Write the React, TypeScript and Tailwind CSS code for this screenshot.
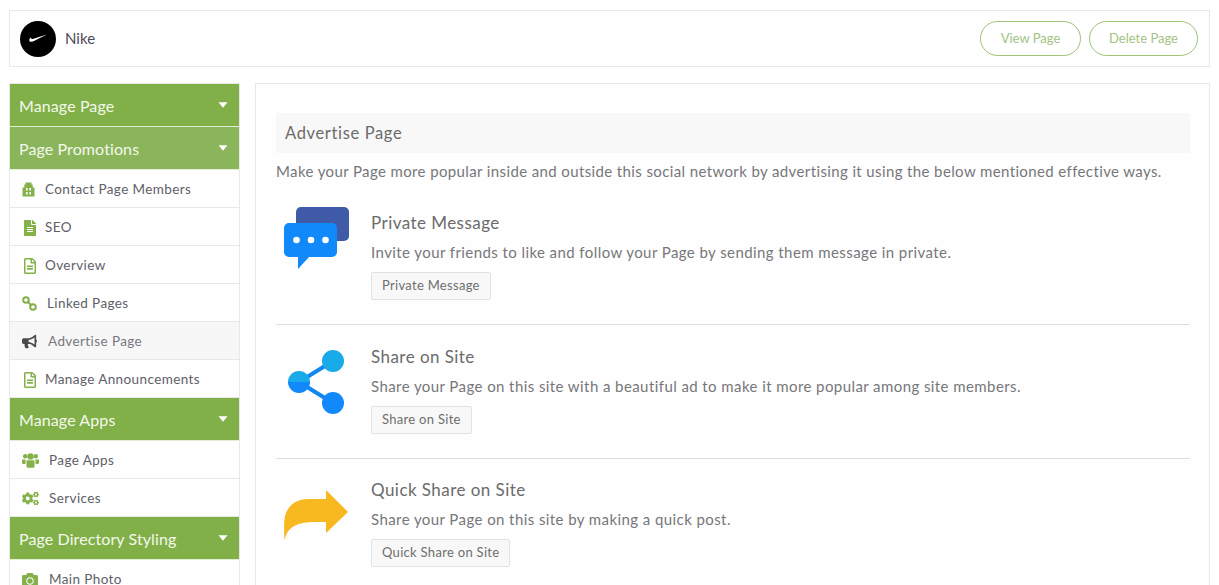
import * as React from "react"
import { FaFileAlt, FaRegFileAlt, FaBullhorn, FaCogs, FaCamera } from "react-icons/fa"

function CaretDown() {
  return (
    <svg width="10" height="6" viewBox="0 0 10 6" className="mb-[1px]">
      <path d="M0.5 0.3h9L5 5.7z" fill="#ffffff" />
    </svg>
  )
}

function ContactIcon() {
  return (
    <svg width="13" height="15" viewBox="0 0 13 15" fill="#84b149">
      <path d="M3.5 0.5h6v2h1.2v3H12.5V14.5H0.5V5.5h1.8v-3h1.2z" />
      <rect x="4" y="6" width="1.6" height="2.5" fill="#fff" />
      <rect x="7.4" y="6" width="1.6" height="2.5" fill="#fff" />
      <rect x="4" y="10" width="1.6" height="2.5" fill="#fff" />
      <rect x="7.4" y="10" width="1.6" height="2.5" fill="#fff" />
    </svg>
  )
}

function LinkIcon() {
  return (
    <svg width="15" height="15" viewBox="0 0 15 15" fill="none" stroke="#84b149" strokeWidth="2">
      <circle cx="4" cy="4" r="2.8" />
      <circle cx="11" cy="11" r="2.8" />
      <path d="M5.5 5.5l4 4" />
    </svg>
  )
}

function UsersIcon() {
  return (
    <svg width="17" height="15" viewBox="0 0 17 15" fill="#84b149">
      <circle cx="3.2" cy="3.2" r="2.2" />
      <circle cx="13.8" cy="3.2" r="2.2" />
      <circle cx="8.5" cy="3.4" r="3.2" />
      <path d="M0 6.5h3.5v4.5H1.2C0.5 11 0 10.5 0 9.8zM17 6.5h-3.5v4.5h2.3c.7 0 1.2-.5 1.2-1.2z" />
      <path d="M4.5 7.2h8v6c0 1-.6 1.6-1.6 1.6H6.1c-1 0-1.6-.6-1.6-1.6z" />
    </svg>
  )
}

function SectionHeader({ label, light }: { label: string; light?: boolean }) {
  return (
    <div
      className={`h-[43px] flex items-center justify-between pt-[1px] pl-[9px] pr-[11px] border-b border-[#e3eed5] text-[16px] tracking-[0.1px] text-[#f4f8ec] ${
        light ? "bg-[#8ab55a]" : "bg-[#82b048]"
      }`}
    >
      <span>{label}</span>
      <CaretDown />
    </div>
  )
}

function SideItem({
  label,
  icon,
  iconWidth,
  active,
}: {
  label: string
  icon: React.ReactNode
  iconWidth: string
  active?: boolean
}) {
  return (
    <div
      className={`h-[38px] flex items-center pl-[12px] pt-[2px] border-b border-[#e8e8e8] text-[13.5px] tracking-[0.4px] ${
        active ? "bg-[#f7f7f7] text-[#77777f]" : "bg-[#fefefe] text-[#5f5f68]"
      }`}
    >
      <span className={`flex items-center shrink-0 ${iconWidth}`}>{icon}</span>
      <span>{label}</span>
    </div>
  )
}

function PromoRow({
  title,
  desc,
  button,
  icon,
  divider,
}: {
  title: string
  desc: string
  button: string
  icon: React.ReactNode
  divider?: boolean
}) {
  return (
    <div className={`flex h-[134px] ${divider ? "pt-[20px] border-b border-[#dddddd]" : "pt-[19px]"}`}>
      <div className="w-[95px] shrink-0 pl-[7px] pt-[14px]">{icon}</div>
      <div className="flex flex-col items-start">
        <div className="text-[17px] leading-[24px] tracking-[0.45px] text-[#6b6b6b]">{title}</div>
        <div className="mt-[6px] text-[15px] leading-[22px] tracking-[0.42px] text-[#77777a]">{desc}</div>
        <button className="mt-[9px] h-[28px] px-[10px] rounded-[2px] border border-[#e2e2e2] bg-[#f8f8f8] text-[13px] tracking-[0.3px] text-[#6e6e6e]">
          {button}
        </button>
      </div>
    </div>
  )
}

const green = "text-[#84b149]"

export default function App() {
  return (
    <div
      className="h-[585px] w-[1219px] overflow-hidden bg-white px-[9px] pt-[10px]"
      style={{ fontFamily: "Lato, 'Noto Sans', sans-serif" }}
    >
      <div className="h-[57px] w-[1201px] flex items-center justify-between border border-[#e8e8e8] bg-[#fefefe] pl-[10px] pr-[11px]">
        <div className="flex items-center gap-[9px]">
          <div className="w-9 h-9 rounded-full bg-black flex items-center justify-center">
            <svg width="18" height="9" viewBox="0 0 18 9">
              <path d="M17.8 0.6 5.5 6.8C3.4 7.9 1.4 8.1 0.6 7.2 -0.1 6.3 0.4 4.8 1.8 3.2 1.6 4.8 2.6 5.2 4.6 4.7z" fill="#ffffff" />
            </svg>
          </div>
          <span className="text-[15px] text-[#4c4c54]">Nike</span>
        </div>
        <div className="flex gap-[8px]">
          <button className="h-[35px] w-[101px] rounded-full border border-[#9dc374] bg-white text-[13px] text-[#a3c383]">
            View Page
          </button>
          <button className="h-[35px] w-[109px] rounded-full border border-[#9dc374] bg-white text-[13px] text-[#a3c383]">
            Delete Page
          </button>
        </div>
      </div>

      <div className="mt-[16px] flex gap-[15px] items-start">
        <div className="w-[231px] shrink-0 border-x border-t border-[#e8e8e8]">
          <SectionHeader label="Manage Page" />
          <SectionHeader label="Page Promotions" light />
          <SideItem label="Contact Page Members" iconWidth="w-[23px]" icon={<ContactIcon />} />
          <SideItem label="SEO" iconWidth="w-[23px]" icon={<FaFileAlt size={16} className={green} />} />
          <SideItem label="Overview" iconWidth="w-[23px]" icon={<FaRegFileAlt size={16} className={green} />} />
          <SideItem label="Linked Pages" iconWidth="w-[25px]" icon={<LinkIcon />} />
          <SideItem
            label="Advertise Page"
            iconWidth="w-[26px]"
            active
            icon={<FaBullhorn size={15} className="text-[#4a4a4a]" />}
          />
          <SideItem label="Manage Announcements" iconWidth="w-[23px]" icon={<FaRegFileAlt size={16} className={green} />} />
          <SectionHeader label="Manage Apps" />
          <SideItem label="Page Apps" iconWidth="w-[27px]" icon={<UsersIcon />} />
          <SideItem label="Services" iconWidth="w-[27px]" icon={<FaCogs size={17} className={green} />} />
          <SectionHeader label="Page Directory Styling" />
          <SideItem label="Main Photo" iconWidth="w-[27px]" icon={<FaCamera size={16} className={green} />} />
        </div>

        <div className="w-[957px] h-[600px] border border-[#e8e8e8] bg-[#fefefe] pl-[20px] pr-[19px] pt-[29px]">
          <div className="h-[40px] flex items-center bg-[#f8f8f8] pl-[9px] text-[16.5px] tracking-[0.65px] text-[#6b6b6b]">
            Advertise Page
          </div>
          <div className="mt-[7px] text-[15px] leading-[22px] tracking-[0.38px] text-[#77777a]">
            Make your Page more popular inside and outside this social network by advertising it using the below mentioned effective ways.
          </div>
          <div className="mt-[9px]">
            <PromoRow
              divider
              title="Private Message"
              desc="Invite your friends to like and follow your Page by sending them message in private."
              button="Private Message"
              icon={
                <svg width="66" height="63" viewBox="0 0 66 63" className="mt-[-18px] ml-[1px]">
                  <rect x="12" y="0" width="53" height="34" rx="5" fill="#3f5aa6" />
                  <path d="M5 16h43a5 5 0 0 1 5 5v24a5 5 0 0 1-5 5H25L14 62V50H5a5 5 0 0 1-5-5V21a5 5 0 0 1 5-5z" fill="#1189fb" />
                  <circle cx="12.5" cy="33" r="3.3" fill="#fff" />
                  <circle cx="27" cy="33" r="3.3" fill="#fff" />
                  <circle cx="41.5" cy="33" r="3.3" fill="#fff" />
                </svg>
              }
            />
            <PromoRow
              divider
              title="Share on Site"
              desc="Share your Page on this site with a beautiful ad to make it more popular among site members."
              button="Share on Site"
              icon={
                <svg width="58" height="66" viewBox="0 0 58 66" className="mt-[-9px] ml-[5px]">
                  <path d="M11 32 45 11M11 32l34 21" stroke="#1187f0" strokeWidth="4" />
                  <circle cx="45" cy="11" r="11" fill="#18aae9" />
                  <circle cx="45" cy="53" r="11" fill="#1189fb" />
                  <path d="M0 32a11 11 0 0 1 22 0z" fill="#18aae9" />
                  <path d="M0 32a11 11 0 0 0 22 0z" fill="#1189fb" />
                </svg>
              }
            />
            <PromoRow
              title="Quick Share on Site"
              desc="Share your Page on this site by making a quick post."
              button="Quick Share on Site"
              icon={
                <svg width="65" height="52" viewBox="0 0 65 52" className="mt-[-2px] ml-[1px]">
                  <path d="M42 0 64 22 42 43V32H32C14 32 3 36 0.5 51 0 40 0 35 0.5 29 2 17 11 9 24 9H42z" fill="#f8b81f" />
                </svg>
              }
            />
          </div>
        </div>
      </div>
    </div>
  )
}
